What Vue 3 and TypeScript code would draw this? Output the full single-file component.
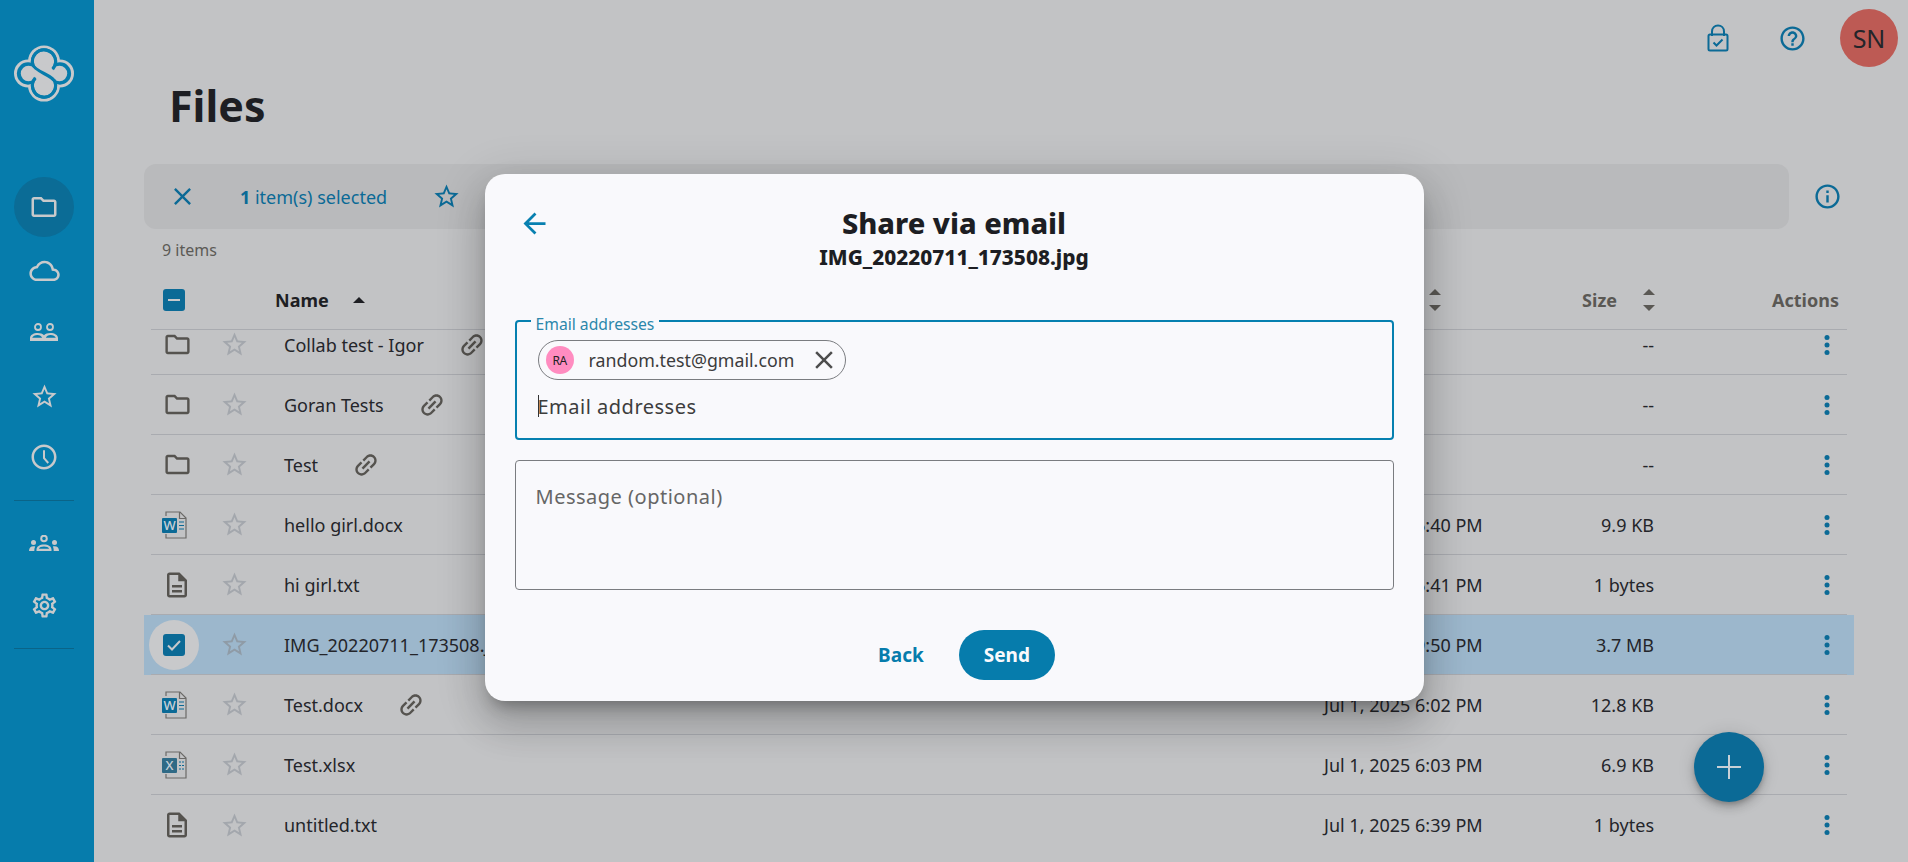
<template>
  <div class="page">
    <aside class="sidebar">
      <div class="logo">
        <svg width="60" height="57" viewBox="0 0 62 58">
          <g fill="#c8c9cb">
            <circle cx="31" cy="16.500" r="16.500" />
            <circle cx="31" cy="41.500" r="16.500" />
            <circle cx="14.500" cy="29" r="14.500" />
            <circle cx="47.500" cy="29" r="14.500" />
          </g>
          <g fill="#067cac">
            <circle cx="31" cy="16.500" r="13.500" />
            <circle cx="31" cy="41.500" r="13.500" />
            <circle cx="14.500" cy="29" r="11.500" />
            <circle cx="47.500" cy="29" r="11.500" />
          </g>
          <g fill="#c8c9cb">
            <circle cx="31" cy="16.500" r="10.500" />
            <circle cx="31" cy="41.500" r="10.500" />
            <circle cx="15" cy="29" r="8" />
            <circle cx="47" cy="29" r="8" />
            <circle cx="31" cy="29" r="10" />
          </g>
          <path d="M40 24.500A12 12 0 1 0 19.500 20C21 27 41 31 42.500 38A12 12 0 1 1 22 33.500" fill="none" stroke="#067cac" stroke-width="3.200" />
        </svg>
      </div>
      <nav class="nav">
        <a class="nav-item nav-active">
          <svg viewBox="0 0 24 24" width="30" height="30"><path d="M9.170 6l2 2H20v10H4V6h5.170M10 4H4c-1.100 0-1.990.9-1.990 2L2 18c0 1.100.9 2 2 2h16c1.100 0 2-.9 2-2V8c0-1.100-.9-2-2-2h-8l-2-2z" /></svg>
        </a>
        <a class="nav-item">
          <svg viewBox="0 0 24 24" width="33" height="33"><path d="M12 6c2.620 0 4.880 1.860 5.390 4.430l.3 1.500 1.530.11C20.780 12.140 22 13.450 22 15c0 1.650-1.350 3-3 3H6c-2.210 0-4-1.790-4-4 0-2.050 1.530-3.760 3.560-3.970l1.070-.11.5-.95C8.080 7.140 9.940 6 12 6m0-2C9.110 4 6.600 5.640 5.350 8.040 2.340 8.360 0 10.910 0 14c0 3.310 2.690 6 6 6h13c2.760 0 5-2.240 5-5 0-2.640-2.050-4.780-4.650-4.960C18.670 6.590 15.640 4 12 4z" transform="translate(1 2) scale(.92)" /></svg>
        </a>
        <a class="nav-item">
          <svg viewBox="0 0 28 18" width="28" height="18">
            <circle cx="8" cy="4" r="3" fill="none" stroke="#c8c9cb" stroke-width="1.800" />
            <circle cx="20" cy="4" r="3" fill="none" stroke="#c8c9cb" stroke-width="1.800" />
            <path d="M0 18v-3c0-3 3.500-5 7.500-5 2.800 0 5.300.9 6.500 2.300 1.200-1.400 3.700-2.300 6.500-2.300 4 0 7.500 2 7.500 5v3H0zm2.200-3.200h10c-.6-1.800-2.500-2.900-4.700-2.900-2.500 0-4.700 1.100-5.300 2.900zm13.600 0h10c-.6-1.800-2.800-2.900-5.300-2.900-2.200 0-4.100 1.100-4.700 2.900z" />
          </svg>
        </a>
        <a class="nav-item nav-star">
          <svg viewBox="0 0 24 24" width="29" height="29"><path d="M22 9.240l-7.190-.62L12 2 9.190 8.630 2 9.240l5.460 4.730L5.820 21 12 17.270 18.180 21l-1.630-7.030L22 9.240zM12 15.400l-3.760 2.270 1-4.280-3.320-2.880 4.380-.38L12 6.100l1.710 4.040 4.380.38-3.320 2.880 1 4.280L12 15.400z" /></svg>
        </a>
        <a class="nav-item">
          <svg viewBox="0 0 24 24" width="30" height="30"><path d="M11.990 2C6.470 2 2 6.480 2 12s4.470 10 9.990 10C17.520 22 22 17.520 22 12S17.520 2 11.990 2zM12 20c-4.420 0-8-3.580-8-8s3.580-8 8-8 8 3.580 8 8-3.580 8-8 8z" /><path d="M11.200 6.500h1.600v6l3.200 3.700-1.200 1.100-3.600-4.200z" /></svg>
        </a>
        <div class="nav-divider"></div>
        <a class="nav-item">
          <svg viewBox="0 0 30 16" width="30" height="16">
            <circle cx="15" cy="3.500" r="2.800" fill="none" stroke="#c8c9cb" stroke-width="2" />
            <path d="M7.500 16v-1.500c0-3 3.300-5 7.500-5s7.500 2 7.500 5V16zm2.400-2.200h10.200c-.5-1.500-2.600-2.300-5.100-2.300s-4.600.8-5.100 2.300z" />
            <circle cx="4.500" cy="7.500" r="2.500" />
            <circle cx="25.500" cy="7.500" r="2.500" />
            <path d="M0 16c0-2.800 1.500-4.800 4.500-4.800.6 0 1.200.1 1.700.3C5.500 12.800 5.300 14.300 5.300 16zM30 16c0-2.800-1.500-4.800-4.500-4.800-.6 0-1.200.1-1.700.3.7 1.300.9 2.800.9 4.500z" />
          </svg>
        </a>
        <a class="nav-item">
          <svg viewBox="0 0 24 24" width="29" height="29"><path d="M19.430 12.980c.04-.32.070-.64.070-.98s-.03-.66-.07-.98l2.110-1.650c.19-.15.240-.42.120-.64l-2-3.460c-.12-.22-.39-.3-.61-.22l-2.490 1c-.52-.4-1.080-.73-1.690-.98l-.38-2.650C14.460 2.180 14.250 2 14 2h-4c-.25 0-.46.18-.49.420l-.38 2.650c-.61.25-1.170.59-1.690.98l-2.490-1c-.23-.09-.49 0-.61.22l-2 3.460c-.13.220-.07.490.12.640l2.110 1.650c-.04.320-.07.650-.07.980s.03.660.07.980l-2.110 1.650c-.19.150-.24.420-.12.640l2 3.460c.12.220.39.300.61.220l2.490-1c.52.400 1.080.730 1.690.980l.38 2.650c.03.240.24.420.49.420h4c.25 0 .46-.18.49-.42l.38-2.650c.61-.25 1.170-.59 1.690-.98l2.490 1c.23.090.49 0 .61-.22l2-3.460c.12-.22.07-.49-.12-.64l-2.110-1.650zm-1.980-1.710c.04.310.05.520.05.730 0 .21-.02.430-.05.730l-.14 1.130.89.700 1.080.840-.7 1.210-1.270-.51-1.040-.42-.9.680c-.43.320-.84.560-1.250.730l-1.060.43-.16 1.130-.2 1.350h-1.400l-.19-1.350-.16-1.130-1.060-.43c-.43-.18-.83-.41-1.230-.71l-.91-.7-1.060.43-1.270.51-.7-1.210 1.080-.84.890-.7-.14-1.130c-.03-.31-.05-.54-.05-.74s.02-.43.05-.73l.14-1.130-.89-.7-1.080-.84.7-1.210 1.270.51 1.040.42.9-.68c.43-.32.84-.56 1.250-.73l1.060-.43.160-1.130.2-1.350h1.390l.19 1.350.16 1.130 1.060.43c.43.180.83.410 1.230.710l.91.700 1.060-.43 1.270-.51.7 1.210-1.070.850-.89.700.14 1.130zM12 8c-2.210 0-4 1.790-4 4s1.790 4 4 4 4-1.790 4-4-1.790-4-4-4zm0 6c-1.100 0-2-.9-2-2s.9-2 2-2 2 .9 2 2-.9 2-2 2z" /></svg>
        </a>
        <div class="nav-divider"></div>
      </nav>
    </aside>

    <main class="main">
      <header class="topbar">
        <svg class="top-icon lock" viewBox="0 0 22 28" width="22" height="28">
          <path d="M5 12V7.500C5 3.900 7.600 1.500 11 1.500s6 2.400 6 6V12" fill="none" stroke="#0b6a96" stroke-width="2" />
          <rect x="1.500" y="10.500" width="19" height="16" rx="1.500" fill="none" stroke="#0b6a96" stroke-width="2" />
          <path d="M6.500 18.500l3 3 6-6" fill="none" stroke="#0b6a96" stroke-width="2" />
        </svg>
        <svg class="top-icon help" viewBox="0 0 24 24" width="29" height="29"><path fill="#0b6a96" d="M11 18h2v-2h-2v2zm1-16C6.480 2 2 6.480 2 12s4.480 10 10 10 10-4.480 10-10S17.520 2 12 2zm0 18c-4.410 0-8-3.590-8-8s3.590-8 8-8 8 3.590 8 8-3.590 8-8 8zm0-14c-2.210 0-4 1.790-4 4h2c0-1.100.9-2 2-2s2 .9 2 2c0 2-3 1.750-3 5h2c0-2.250 3-2.500 3-5 0-2.210-1.790-4-4-4z" /></svg>
        <div class="user-avatar">SN</div>
      </header>

      <h1 class="title">Files</h1>

      <div class="content">
        <div class="bar-row">
          <div class="select-bar">
            <svg viewBox="0 0 24 24" width="29" height="29"><path fill="#0b6a96" d="M19 6.410L17.590 5 12 10.590 6.410 5 5 6.410 10.590 12 5 17.590 6.410 19 12 13.410 17.590 19 19 17.590 13.410 12z" /></svg>
            <span class="selected-text"><b>1</b> item(s) selected</span>
            <svg viewBox="0 0 24 24" width="29" height="29"><path fill="#0b6a96" d="M22 9.240l-7.190-.62L12 2 9.190 8.630 2 9.240l5.460 4.730L5.820 21 12 17.270 18.180 21l-1.630-7.030L22 9.240zM12 15.400l-3.760 2.270 1-4.280-3.320-2.880 4.380-.38L12 6.100l1.710 4.040 4.380.38-3.320 2.880 1 4.280L12 15.400z" /></svg>
          </div>
          <div class="info-box">
            <svg viewBox="0 0 24 24" width="29" height="29"><path fill="#0b6a96" d="M11 7h2v2h-2zm0 4h2v6h-2zm1-9C6.480 2 2 6.480 2 12s4.480 10 10 10 10-4.480 10-10S17.520 2 12 2zm0 18c-4.410 0-8-3.590-8-8s3.590-8 8-8 8 3.590 8 8-3.590 8-8 8z" /></svg>
          </div>
        </div>

        <div class="count">9 items</div>

        <div class="table">
          <div class="row-wrap head-wrap">
            <div class="grid head">
              <span class="check"><svg viewBox="0 0 22 22" width="22" height="22"><rect width="22" height="22" rx="3" fill="#0b6a96" /><rect x="5" y="10" width="12" height="2" fill="#c8c9cb" /></svg></span>
              <span></span>
              <span class="head-name">Name<i class="up dark"></i></span>
              <span class="head-cell">Modified<i class="sort"><i class="up"></i><i class="down"></i></i></span>
              <span class="head-cell head-size">Size<i class="sort"><i class="up"></i><i class="down"></i></i></span>
              <span class="head-actions">Actions</span>
            </div>
          </div>

          <div class="list">
            <div v-for="(file, i) in files" :key="file.name" class="row-wrap" :class="{ selected: file.selected }">
              <div class="grid row" :class="{ last: i === files.length - 1 }">
                <span class="type-cell">
                  <span v-if="file.selected" class="check-halo">
                    <svg viewBox="0 0 22 22" width="22" height="22"><rect width="22" height="22" rx="3" fill="#0b6a96" /><path d="M5 11.500l4 4 8-8.500" fill="none" stroke="#c8c9cb" stroke-width="2" /></svg>
                  </span>
                  <svg v-else-if="file.type === 'folder'" viewBox="0 0 24 24" width="29" height="29"><path fill="#55534f" d="M9.170 6l2 2H20v10H4V6h5.170M10 4H4c-1.100 0-1.990.9-1.990 2L2 18c0 1.100.9 2 2 2h16c1.100 0 2-.9 2-2V8c0-1.100-.9-2-2-2h-8l-2-2z" /></svg>
                  <svg v-else-if="file.type === 'text'" viewBox="0 0 24 24" width="30" height="30"><path fill="#55534f" d="M8 16h8v2H8zm0-4h8v2H8zm6-10H6c-1.100 0-2 .9-2 2v16c0 1.100.89 2 1.990 2H18c1.100 0 2-.9 2-2V8l-6-6zm4 18H6V4h7v5h5v11z" /></svg>
                  <svg v-else class="office" viewBox="0 0 26 28" width="26" height="28">
                    <path d="M4 5V1h14l6 6v20H4v-4" fill="none" stroke="#6b6a68" stroke-width="1.200" />
                    <path d="M17.500 1v6.500H24" fill="none" stroke="#6b6a68" stroke-width="1.200" />
                    <rect y="7" width="15" height="15" rx="1" :fill="file.type === 'word' ? '#0b6a96' : '#2f6a86'" />
                    <text x="7.500" y="19" text-anchor="middle" class="office-letter">{{ file.type === 'word' ? 'W' : 'X' }}</text>
                    <path d="M17 11h5M17 14.500h5M17 18h5" stroke="#0b6a96" stroke-width="1.200" :stroke-dasharray="file.type === 'word' ? 'none' : '2 1'" />
                  </svg>
                </span>
                <span class="star-cell">
                  <svg viewBox="0 0 24 24" width="29" height="29"><path :fill="file.selected ? '#8f9ba6' : '#a3a7ad'" d="M22 9.240l-7.190-.62L12 2 9.190 8.630 2 9.240l5.460 4.730L5.820 21 12 17.270 18.180 21l-1.630-7.030L22 9.240zM12 15.400l-3.760 2.270 1-4.280-3.320-2.880 4.380-.38L12 6.100l1.710 4.040 4.380.38-3.320 2.880 1 4.280L12 15.400z" /></svg>
                </span>
                <span class="name-cell">
                  <span>{{ file.name }}</span>
                  <svg v-if="file.linked" class="link" viewBox="0 0 24 24" width="30" height="30"><path fill="#55534f" transform="rotate(-45 12 12)" d="M3.900 12c0-1.710 1.390-3.100 3.100-3.100h4V7H7c-2.760 0-5 2.240-5 5s2.240 5 5 5h4v-1.900H7c-1.710 0-3.100-1.390-3.100-3.100zM8 13h8v-2H8v2zm9-6h-4v1.900h4c1.710 0 3.100 1.390 3.100 3.100s-1.390 3.100-3.100 3.100h-4V17h4c2.760 0 5-2.240 5-5s-2.240-5-5-5z" /></svg>
                </span>
                <span class="date-cell">{{ file.date }}</span>
                <span class="size-cell">{{ file.size }}</span>
                <span class="action-cell">
                  <svg viewBox="0 0 24 24" width="24" height="24"><circle cx="12" cy="4.500" r="2.500" fill="#0b6a96" /><circle cx="12" cy="12" r="2.500" fill="#0b6a96" /><circle cx="12" cy="19.500" r="2.500" fill="#0b6a96" /></svg>
                </span>
              </div>
            </div>
          </div>
        </div>
      </div>

      <button class="fab" aria-label="add">
        <svg viewBox="0 0 24 24" width="24" height="24"><path d="M11 0h2v11h11v2H13v11h-2V13H0v-2h11z" fill="#c8d0d6" /></svg>
      </button>
    </main>

    <div class="overlay">
      <section class="dialog">
        <svg class="back-arrow" viewBox="0 0 24 24" width="33" height="33"><path fill="#0880b0" d="M20 11H7.830l5.590-5.590L12 4l-8 8 8 8 1.410-1.410L7.830 13H20v-2z" /></svg>
        <h2 class="dialog-title">Share via email</h2>
        <p class="dialog-sub">IMG_20220711_173508.jpg</p>

        <fieldset class="email-field">
          <legend>Email addresses</legend>
          <div class="chip">
            <span class="chip-avatar">RA</span>
            <span class="chip-text">random.test@gmail.com</span>
            <svg viewBox="0 0 24 24" width="30" height="30"><path fill="#4d4d4d" d="M19 6.410L17.590 5 12 10.590 6.410 5 5 6.410 10.590 12 5 17.590 6.410 19 12 13.410 17.590 19 19 17.590 13.410 12z" /></svg>
          </div>
          <div class="email-input">
            <span class="caret"></span>
            <input type="text" placeholder="Email addresses" />
          </div>
        </fieldset>

        <textarea class="message" placeholder="Message (optional)"></textarea>

        <div class="dialog-actions">
          <button class="btn-back">Back</button>
          <button class="btn-send">Send</button>
        </div>
      </section>
    </div>
  </div>
</template>

<script setup lang="ts">
interface FileRow {
  name: string
  type: 'folder' | 'word' | 'excel' | 'text'
  date: string
  size: string
  linked?: boolean
  selected?: boolean
}

const files: FileRow[] = [
  { name: 'Collab test - Igor', type: 'folder', date: '', size: '--', linked: true },
  { name: 'Goran Tests', type: 'folder', date: '', size: '--', linked: true },
  { name: 'Test', type: 'folder', date: '', size: '--', linked: true },
  { name: 'hello girl.docx', type: 'word', date: 'Jul 1, 2025 6:40 PM', size: '9.9 KB' },
  { name: 'hi girl.txt', type: 'text', date: 'Jul 1, 2025 6:41 PM', size: '1 bytes' },
  { name: 'IMG_20220711_173508.jpg', type: 'text', date: 'Jul 1, 2025 9:50 PM', size: '3.7 MB', selected: true },
  { name: 'Test.docx', type: 'word', date: 'Jul 1, 2025 6:02 PM', size: '12.8 KB', linked: true },
  { name: 'Test.xlsx', type: 'excel', date: 'Jul 1, 2025 6:03 PM', size: '6.9 KB' },
  { name: 'untitled.txt', type: 'text', date: 'Jul 1, 2025 6:39 PM', size: '1 bytes' },
]
</script>

<style>
html, body {
  margin: 0;
  overflow: hidden;
}
</style>

<style scoped>
.page {
  position: relative;
  display: flex;
  width: 1908px;
  height: 862px;
  overflow: hidden;
  background: #c2c3c5;
  font-family: "Noto Sans", "Open Sans", sans-serif;
  font-size: 16px;
  color: #24252a;
}

.sidebar {
  flex: 0 0 94px;
  box-sizing: border-box;
  padding-right: 6px;
  background: #067cac;
}

.logo {
  display: flex;
  justify-content: center;
  padding-top: 45px;
  height: 134px;
  box-sizing: border-box;
}

.nav {
  display: flex;
  flex-direction: column;
  align-items: center;
  padding-top: 43px;
}

.nav-item {
  display: flex;
  align-items: center;
  justify-content: center;
  width: 60px;
  height: 60px;
  margin-bottom: 2.500px;
  border-radius: 50%;
  fill: #c8c9cb;
}

.nav-star svg {
  margin-top: 3px;
}

.nav-active {
  background: #0b6c96;
}

.nav-divider {
  width: 60px;
  height: 1px;
  margin: 10px 0 12px;
  background: #0a6488;
}

.main {
  position: relative;
  flex: 1;
  min-width: 0;
}

.topbar {
  display: flex;
  align-items: center;
  justify-content: flex-end;
  height: 76px;
  padding-right: 10px;
}

.lock {
  margin-right: 49px;
}

.help {
  margin-right: 33px;
}

.user-avatar {
  display: flex;
  align-items: center;
  justify-content: center;
  width: 58px;
  height: 58px;
  border-radius: 50%;
  background: #bd5a54;
  font-size: 25px;
}

.title {
  margin: 0 0 28px 75px;
  height: 60px;
  font-size: 43px;
  line-height: 60px;
  font-weight: 700;
  color: #1d1e23;
}

.content {
  width: 1710px;
  margin-left: 50px;
}

.bar-row {
  display: flex;
  height: 65px;
}

.select-bar {
  flex: 1;
  display: flex;
  align-items: center;
  padding-left: 24px;
  background: #b9babc;
  border-radius: 12px;
  color: #0b6a96;
}

.selected-text {
  margin: 0 45px 0 43px;
  font-size: 18px;
}

.info-box {
  display: flex;
  align-items: center;
  flex: 0 0 65px;
  padding-left: 24px;
  box-sizing: border-box;
}

.count {
  height: 41px;
  padding-left: 18px;
  font-size: 16px;
  line-height: 42px;
  color: #5c5a56;
}

.row-wrap {
  padding: 0 7px;
}

.head-wrap {
  position: relative;
  z-index: 1;
  background: #c2c3c5;
}

.grid {
  display: grid;
  grid-template-columns: 52px 62px 1059px 199px 131px 1fr;
  align-items: center;
  height: 60px;
  box-sizing: border-box;
  border-bottom: 1px solid #a9abb0;
  font-size: 18px;
}

.head {
  font-weight: 700;
  color: #5a5854;
}

.check {
  display: flex;
  padding-left: 12px;
}

.head-name {
  display: flex;
  align-items: center;
  padding-left: 10px;
  color: #1d1e23;
}

.head-cell {
  display: flex;
  align-items: center;
  gap: 26px;
}

.head-size {
  justify-content: flex-end;
  gap: 26px;
  margin-right: -1px;
}

.head-actions {
  padding-right: 8px;
  text-align: right;
}

.sort {
  display: flex;
  flex-direction: column;
  gap: 10px;
  width: 12px;
}

.up,
.down {
  display: block;
  width: 0;
  height: 0;
  border-left: 6px solid transparent;
  border-right: 6px solid transparent;
}

.up {
  border-bottom: 6px solid #5a5854;
}

.down {
  border-top: 6px solid #5a5854;
}

.up.dark {
  margin-left: 24px;
  border-bottom-color: #1d1e23;
}

.list {
  height: 532px;
  overflow: hidden;
}

.list > .row-wrap:first-child {
  margin-top: -15px;
}

.selected {
  background: #9cb7cc;
}

.last {
  border-bottom: none;
}

.type-cell {
  display: flex;
  justify-content: center;
  align-items: center;
  height: 100%;
}

.office {
  margin-left: -4px;
}

.office-letter {
  font-family: "Noto Sans", sans-serif;
  font-size: 13px;
  font-weight: 500;
  fill: #c8d0d6;
}

.check-halo {
  display: flex;
  align-items: center;
  justify-content: center;
  width: 50px;
  height: 50px;
  margin-left: -6px;
  border-radius: 50%;
  background: #c8c9cb;
}

.star-cell {
  display: flex;
  justify-content: center;
}

.name-cell {
  display: flex;
  align-items: center;
  gap: 33px;
  padding-left: 19px;
}

.size-cell {
  text-align: right;
}

.action-cell {
  display: flex;
  justify-content: flex-end;
  padding-right: 8px;
}

.fab {
  position: absolute;
  right: 144px;
  bottom: 60px;
  display: flex;
  align-items: center;
  justify-content: center;
  width: 70px;
  height: 70px;
  padding: 0;
  border: none;
  border-radius: 50%;
  background: #0b6a96;
  box-shadow: 0 3px 5px -1px rgba(0, 0, 0, 0.2), 0 6px 10px 0 rgba(0, 0, 0, 0.14), 0 1px 18px 0 rgba(0, 0, 0, 0.12);
}

.overlay {
  position: absolute;
  inset: 0;
  z-index: 5;
  display: flex;
  align-items: center;
  justify-content: center;
  padding-top: 13px;
  box-sizing: border-box;
}

.dialog {
  position: relative;
  display: flex;
  flex-direction: column;
  width: 939px;
  height: 527px;
  padding: 0 30px 20px;
  box-sizing: border-box;
  background: #f9f9fc;
  border-radius: 20px;
  box-shadow: 0 11px 15px -7px rgba(0, 0, 0, 0.3), 0 24px 38px 3px rgba(0, 0, 0, 0.14), 0 9px 46px 8px rgba(0, 0, 0, 0.12);
}

.back-arrow {
  position: absolute;
  left: 33px;
  top: 33px;
}

.dialog-title {
  margin: 30px 0 0;
  font-size: 29px;
  line-height: 38px;
  font-weight: 800;
  text-align: center;
  color: #1d1e23;
}

.dialog-sub {
  margin: 0 0 49px;
  font-size: 20.800px;
  line-height: 30px;
  font-weight: 800;
  text-align: center;
  color: #1d1e23;
}

.email-field {
  position: relative;
  display: block;
  height: 126px;
  margin: -7px 0 0;
  padding: 0 21px;
  box-sizing: border-box;
  border: 2px solid #0680b0;
  border-radius: 4px;
}

legend {
  position: relative;
  top: 3px;
  margin-left: -7px;
  padding: 0 5px;
  font-size: 15.700px;
  line-height: 14px;
  color: #2b87ab;
}

.chip {
  display: inline-flex;
  align-items: center;
  height: 40px;
  margin-top: 12px;
  padding: 0 6px 0 7px;
  box-sizing: border-box;
  border: 1px solid #7a7c80;
  border-radius: 20px;
  color: #3c3c3c;
}

.chip-avatar {
  display: flex;
  align-items: center;
  justify-content: center;
  width: 28px;
  height: 28px;
  margin-right: 15px;
  border-radius: 50%;
  background: #ff8cc0;
  font-size: 12px;
  letter-spacing: -0.6px;
  color: #222;
}

.chip-text {
  margin-right: 15px;
  font-size: 17.800px;
}

.email-input {
  display: flex;
  align-items: center;
  height: 30px;
  margin-top: 11px;
}

.caret {
  width: 1px;
  height: 22px;
  margin-right: -1px;
  background: #333;
}

.email-input input {
  flex: 1;
  padding: 0;
  border: none;
  outline: none;
  background: transparent;
  font: inherit;
  font-size: 20px;
  letter-spacing: 0.5px;
}

.email-input input::placeholder {
  color: #3d3d3d;
  opacity: 1;
}

.message {
  display: block;
  width: 100%;
  height: 130px;
  margin-top: 20px;
  padding: 22px 20px 0;
  box-sizing: border-box;
  border: 1px solid #7a7c80;
  border-radius: 4px;
  outline: none;
  resize: none;
  background: transparent;
  font: inherit;
  font-size: 20px;
  letter-spacing: 0.5px;
}

.message::placeholder {
  color: #666;
  opacity: 1;
}

.dialog-actions {
  display: flex;
  justify-content: center;
  gap: 10px;
  margin-top: 40px;
}

.btn-back,
.btn-send {
  height: 50px;
  padding: 0 25px;
  border: none;
  border-radius: 25px;
  font: inherit;
  font-size: 19px;
  font-weight: 700;
}

.btn-back {
  background: transparent;
  color: #067cac;
}

.btn-send {
  background: #067cac;
  color: #f9f9fc;
}
</style>
